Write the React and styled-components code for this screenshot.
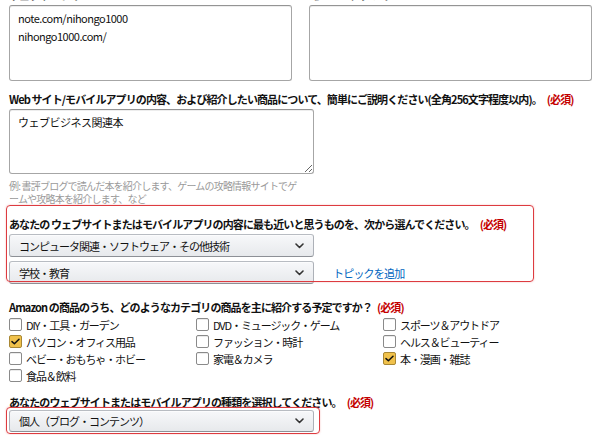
import { createGlobalStyle, styled } from "styled-components";

const GlobalStyle = createGlobalStyle`
    html, body {
        margin: 0;
        padding: 0;
        background: #ffffff;
    }
    body {
        font-family: "Noto Sans CJK JP", "Noto Sans", sans-serif;
        color: #111111;
        overflow: hidden;
    }
`;

const Page = styled.div`
    width: 600px;
    height: 435px;
    overflow: hidden;
    box-sizing: border-box;
    padding: 0 8px 0 9px;
`;

const Shift = styled.div`
    margin-top: -12px;
    display: flex;
    flex-direction: column;
`;

const TwoCols = styled.div`
    display: grid;
    grid-template-columns: 283px 283px;
    column-gap: 17px;
`;

const Field = styled.div`
    display: flex;
    flex-direction: column;
    align-items: flex-start;
    margin-top: ${(p) => p.$top || 0}px;
`;

const Label = styled.div`
    font-size: 11px;
    font-weight: 700;
    letter-spacing: -0.9px;
    line-height: 14px;
    height: 14px;
    white-space: nowrap;
    margin-bottom: ${(p) => p.$gap || 3}px;
`;

const Required = styled.span`
    color: #c40000;
    margin-left: 5px;
`;

const TextBox = styled.textarea`
    box-sizing: border-box;
    width: ${(p) => p.$w || 283}px;
    height: ${(p) => p.$h}px;
    border: 1px solid #a6a6a6;
    border-top-color: #949494;
    border-radius: 3px;
    box-shadow: 0 1px 0 rgba(255, 255, 255, 0.5), 0 1px 0 rgba(0, 0, 0, 0.07) inset;
    padding: 3px 8px;
    font-family: inherit;
    font-size: 11px;
    letter-spacing: -0.5px;
    line-height: 18px;
    color: #111;
    resize: ${(p) => (p.$grip ? "both" : "none")};
    outline: none;
    margin: 0;
    display: block;
`;

const Hint = styled.div`
    width: 288px;
    margin-top: 5px;
    font-size: 10px;
    letter-spacing: -0.8px;
    line-height: 13px;
    color: #9a9a9a;
    line-break: anywhere;
`;

const Highlight = styled.div`
    position: relative;
    margin-top: ${(p) => p.$top}px;
    &::after {
        content: "";
        position: absolute;
        left: -3px;
        top: ${(p) => p.$inTop}px;
        width: ${(p) => p.$w}px;
        bottom: ${(p) => p.$inBottom}px;
        border: 1.5px solid #dd3b40;
        border-radius: 4px;
        box-shadow: 0 0 2px rgba(221, 59, 64, 0.35);
        pointer-events: none;
    }
`;

const SelectRow = styled.div`
    display: flex;
    align-items: center;
    gap: 19px;
    margin-top: ${(p) => p.$top || 0}px;
`;

const Dropdown = styled.div`
    box-sizing: border-box;
    width: 305px;
    height: ${(p) => p.$h || 23}px;
    display: flex;
    align-items: center;
    justify-content: space-between;
    padding: 0 9px 0 9px;
    border: 1px solid #adb1b8;
    border-top-color: #b8bcc2;
    border-bottom-color: #8d9096;
    border-radius: 3px;
    background: linear-gradient(to bottom, #f7f8fa, #e7e9ec);
    box-shadow: 0 1px 0 rgba(255, 255, 255, 0.6) inset;
    font-size: 11px;
    letter-spacing: -1px;
    color: #111;
`;

const Link = styled.a`
    font-size: 11px;
    letter-spacing: -0.8px;
    color: #0066c0;
    text-decoration: none;
`;

const CheckGrid = styled.div`
    display: grid;
    grid-template-columns: 187px 187px 187px;
    grid-auto-rows: 17px;
    margin-top: 1px;
`;

const CheckItem = styled.label`
    display: flex;
    align-items: center;
    gap: 4px;
    font-size: 11px;
    letter-spacing: -1.1px;
    color: #111;
    white-space: nowrap;
`;

const Box = styled.span`
    box-sizing: border-box;
    width: 13px;
    height: 13px;
    flex: none;
    border-radius: 2px;
    border: 1px solid ${(p) => (p.$on ? "#a88734" : "#8a8a8a")};
    background: ${(p) => (p.$on ? "#f0c14b" : "#fff")};
    box-shadow: ${(p) => (p.$on ? "none" : "0 1px 0 rgba(0,0,0,0.08) inset")};
    display: flex;
    align-items: center;
    justify-content: center;
`;

const Chevron = () => (
    <svg width="9" height="6" viewBox="0 0 9 6">
        <path d="M1 1 L4.5 4.5 L8 1" fill="none" stroke="#333" strokeWidth="1.6" strokeLinecap="round" strokeLinejoin="round" />
    </svg>
);

const Check = () => (
    <svg width="9" height="7" viewBox="0 0 9 7">
        <path d="M1 3.6 L3.4 5.8 L8 1.2" fill="none" stroke="#111" strokeWidth="1.5" strokeLinecap="round" strokeLinejoin="round" />
    </svg>
);

const categories = [
    ["DIY・工具・ガーデン", false],
    ["DVD・ミュージック・ゲーム", false],
    ["スポーツ＆アウトドア", false],
    ["パソコン・オフィス用品", true],
    ["ファッション・時計", false],
    ["ヘルス＆ビューティー", false],
    ["ベビー・おもちゃ・ホビー", false],
    ["家電＆カメラ", false],
    ["本・漫画・雑誌", true],
    ["食品＆飲料", false],
];

export default function App() {
    return (
        <Page>
            <GlobalStyle />
            <Shift>
                <TwoCols>
                    <Field>
                        <Label>ウェブサイトのURL</Label>
                        <TextBox $h={76} readOnly value={"note.com/nihongo1000\nnihongo1000.com/"} />
                    </Field>
                    <Field>
                        <Label>モバイルアプリのURL</Label>
                        <TextBox $h={76} readOnly value="" />
                    </Field>
                </TwoCols>

                <Field $top={11}>
                    <Label>
                        Web サイト/モバイルアプリの内容、および紹介したい商品について、簡単にご説明ください(全角256文字程度以内)。
                        <Required>(必須)</Required>
                    </Label>
                    <TextBox $h={65} $w={305} $grip readOnly value="ウェブビジネス関連本" />
                    <Hint>例: 書評ブログで読んだ本を紹介します、ゲームの攻略情報サイトでゲームや攻略本を紹介します、など</Hint>
                </Field>

                <Highlight $top={12} $inTop={-12} $inBottom={2} $w={526}>
                    <Label $gap={3}>
                        あなたの ウェブサイトまたはモバイルアプリの内容に最も近いと思うものを、次から選んでください。
                        <Required>(必須)</Required>
                    </Label>
                    <SelectRow>
                        <Dropdown>
                            コンピュータ関連・ソフトウェア・その他技術
                            <Chevron />
                        </Dropdown>
                    </SelectRow>
                    <SelectRow $top={4}>
                        <Dropdown>
                            学校・教育
                            <Chevron />
                        </Dropdown>
                        <Link href="#">トピックを追加</Link>
                    </SelectRow>
                </Highlight>

                <Field $top={16}>
                    <Label $gap={1}>
                        Amazon の商品のうち、どのようなカテゴリの商品を主に紹介する予定ですか？
                        <Required>(必須)</Required>
                    </Label>
                    <CheckGrid>
                        {categories.map(([name, on]) => (
                            <CheckItem key={name}>
                                <Box $on={on}>{on && <Check />}</Box>
                                {name}
                            </CheckItem>
                        ))}
                    </CheckGrid>
                </Field>

                <Highlight $top={11} $inTop={12} $inBottom={-2} $w={312}>
                    <Label $gap={1}>
                        あなたのウェブサイトまたはモバイルアプリの種類を選択してください。
                        <Required>(必須)</Required>
                    </Label>
                    <Dropdown $h={22}>
                        個人（ブログ・コンテンツ）
                        <Chevron />
                    </Dropdown>
                </Highlight>
            </Shift>
        </Page>
    );
}
